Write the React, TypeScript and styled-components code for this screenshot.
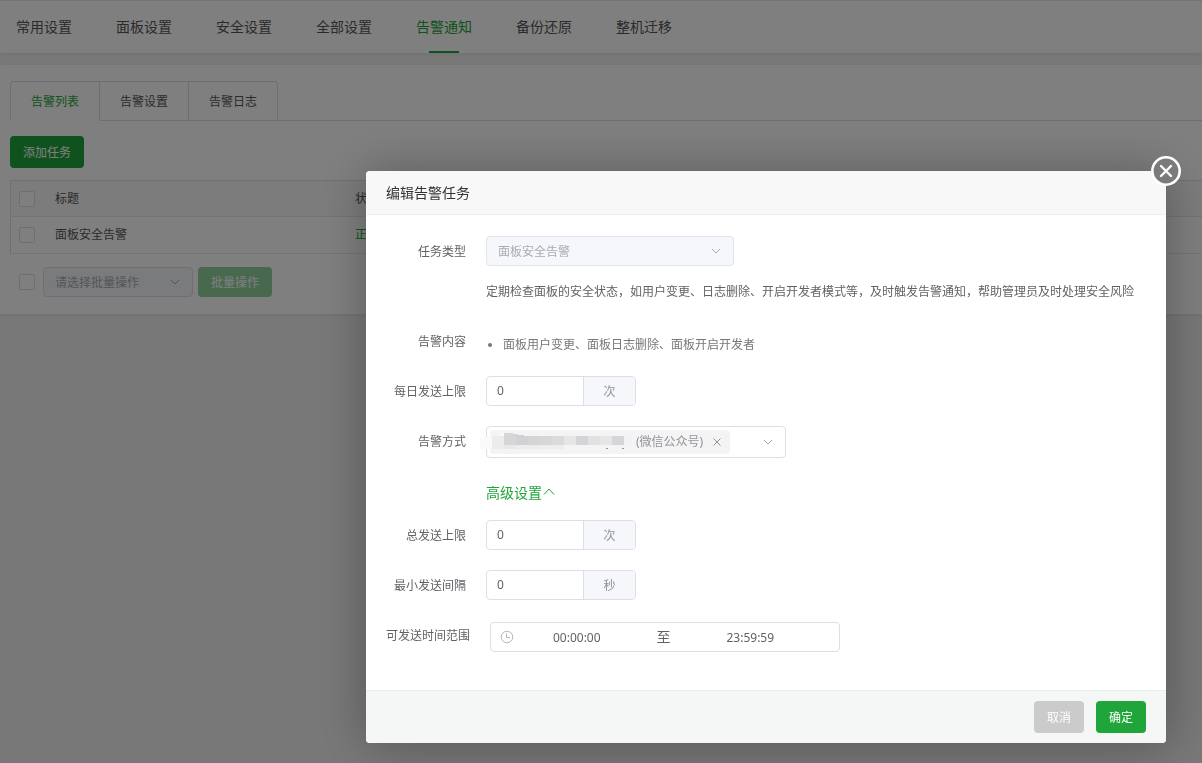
import React from "react";
import styled, { createGlobalStyle, css } from "styled-components";

const GlobalStyle = createGlobalStyle`
  *, *::before, *::after { box-sizing: border-box; }
  body {
    margin: 0;
    background: #f0f0f1;
    color: #606266;
    font: 12px/20px "Noto Sans", "Noto Sans CJK SC", sans-serif;
  }
  button, input, select { font: inherit; color: inherit; }
  a { color: inherit; text-decoration: none; }
`;

const green = "#20a53a";
const line = "#dcdfe6";

const Page = styled.div`
  min-height: 100vh;
`;

const TopNav = styled.nav`
  display: flex;
  gap: 44px;
  height: 53px;
  padding: 0 16px;
  background: #fff;
  border-top: 1px solid #e6e6e6;
  box-shadow: 0 1px 4px rgba(0, 0, 0, 0.08);
`;

const NavLink = styled.a<{ $active?: boolean }>`
  display: flex;
  flex-direction: column;
  align-items: center;
  flex: none;
  font-size: 14px;
  line-height: 52px;
  color: ${(p) => (p.$active ? green : "#555")};
  &::after {
    content: "";
    width: 30px;
    height: 2px;
    margin-top: -2px;
    background: ${(p) => (p.$active ? green : "transparent")};
  }
`;

const Card = styled.main`
  margin-top: 12px;
  padding: 16px 0 17px 10px;
  background: #fff;
  box-shadow: 0 1px 3px rgba(0, 0, 0, 0.08);
`;

const TabBar = styled.div`
  display: flex;
  height: 40px;
  border-bottom: 1px solid ${line};
`;

const Tab = styled.button<{ $active?: boolean }>`
  height: 40px;
  padding: 2px 20px 0;
  margin: 0;
  border: 1px solid ${line};
  border-left-width: 0;
  border-bottom-color: ${(p) => (p.$active ? "#fff" : line)};
  background: #fff;
  color: ${(p) => (p.$active ? green : "#555")};
  &:first-child {
    border-left-width: 1px;
    border-top-left-radius: 4px;
  }
  &:last-child { border-top-right-radius: 4px; }
`;

const Button = styled.button<{ $tone?: "muted" | "soft"; $small?: boolean }>`
  height: ${(p) => (p.$small ? 30 : 32)}px;
  padding: 2px 13px 0;
  border: 0;
  border-radius: 4px;
  color: #fff;
  background: ${(p) =>
    p.$tone === "muted" ? "#cbcbcb" : p.$tone === "soft" ? "#90d29d" : green};
`;

const Toolbar = styled.div`
  padding: 15px 0 12px;
`;

const Table = styled.table`
  width: 100%;
  table-layout: fixed;
  border-collapse: separate;
  border-spacing: 0;
  border-top: 1px solid ${line};
  border-left: 1px solid ${line};
`;

const Cell = styled.td<{ $green?: boolean }>`
  height: 37px;
  padding: 0 0 0 8px;
  text-align: left;
  font-weight: 400;
  color: ${(p) => (p.$green ? green : "#555")};
  border-bottom: 1px solid #e6e8ec;
  thead & { height: 36px; background: #f8f8f8; }
`;

const Check = styled.input.attrs({ type: "checkbox" })`
  appearance: none;
  display: block;
  flex: none;
  width: 16px;
  height: 16px;
  margin: 0;
  border: 1px solid ${line};
  border-radius: 2px;
  background: #fff;
`;

const BatchRow = styled.div`
  display: flex;
  align-items: center;
  padding: 13px 0 0 9px;
`;

const SelectBox = styled.div<{ $width: number }>`
  display: grid;
  align-items: center;
  width: ${(p) => p.$width}px;
  height: 30px;
  & > * { grid-area: 1 / 1; }
  & > svg { justify-self: end; margin-right: 12px; pointer-events: none; }
`;

const Select = styled.select<{ $page?: boolean }>`
  appearance: none;
  width: 100%;
  height: 30px;
  padding: 2px 11px 0;
  border: 1px solid ${(p) => (p.$page ? line : "#e1e4ea")};
  border-radius: 4px;
  background: #f5f7fa;
  color: #a8abb2;
  opacity: 1;
`;

const BatchSelect = styled(SelectBox)`
  margin: 0 5px 0 8px;
`;

const Overlay = styled.div`
  position: fixed;
  inset: 0;
  display: flex;
  justify-content: flex-end;
  align-items: flex-end;
  padding: 20px 36px;
  background: rgba(0, 0, 0, 0.5);
`;

const Dialog = styled.section`
  position: relative;
  width: 800px;
  max-width: 100%;
  border-radius: 4px;
  background: #fff;
  box-shadow: 1px 1px 50px rgba(0, 0, 0, 0.3);
`;

const CloseButton = styled.button`
  position: absolute;
  top: -15px;
  right: -15px;
  width: 30px;
  height: 30px;
  padding: 0;
  border: 0;
  border-radius: 50%;
  background: none;
  svg { display: block; }
`;

const DialogTitle = styled.h2`
  margin: 0;
  padding: 0 20px;
  font-size: 14px;
  font-weight: 400;
  line-height: 43px;
  color: #333;
  background: #f8f8f8;
  border-bottom: 1px solid #eee;
  border-radius: 4px 4px 0 0;
`;

const Form = styled.form`
  display: flex;
  flex-direction: column;
  gap: 20px;
  padding: 21px 20px 38px;
`;

const FormRow = styled.div`
  display: flex;
  gap: 20px;
`;

const labelStyle = css`
  flex: none;
  min-width: 80px;
  height: 30px;
  line-height: 32px;
  text-align: right;
  white-space: nowrap;
`;
const Label = styled.label`${labelStyle}`;
const LabelText = styled.span`${labelStyle}`;

const Field = styled.div`
  flex: 1;
  min-width: 0;
`;

const Hint = styled.p`
  height: 30px;
  margin: 10px 0 0;
  line-height: 32px;
  white-space: nowrap;
`;

const Bullets = styled.ul`
  height: 30px;
  margin: 0;
  padding: 4px 0 0 17px;
  line-height: 30px;
  color: #777;
`;

const InputGroup = styled.div`
  display: flex;
  width: 150px;
  height: 30px;
  border: 1px solid ${line};
  border-radius: 4px;
`;

const NumberInput = styled.input`
  flex: 1;
  min-width: 0;
  padding: 0 10px;
  border: 0;
  background: none;
`;

const Unit = styled.span`
  width: 52px;
  line-height: 30px;
  height: 28px;
  text-align: center;
  color: #909399;
  background: #f5f7fa;
  border-left: 1px solid ${line};
  border-radius: 0 3px 3px 0;
`;

const TagSelect = styled.div`
  display: flex;
  align-items: center;
  justify-content: space-between;
  width: 300px;
  height: 32px;
  padding: 0 11px 0 3px;
  border: 1px solid ${line};
  border-radius: 4px;
`;

const Tag = styled.span`
  display: flex;
  align-items: center;
  height: 24px;
  padding-right: 8px;
  border-radius: 4px;
  color: #909399;
  background: #f4f4f5;
`;

const Mosaic = styled.svg`
  flex: none;
  margin: 0 0 0 -10px;
`;

const IconButton = styled.button`
  display: flex;
  margin: 0;
  padding: 0;
  border: 0;
  background: none;
`;

const TagClose = styled(IconButton)`
  margin-left: 9px;
`;

const Toggle = styled(IconButton)`
  align-items: center;
  margin: 0 0 -8px 100px;
  align-self: flex-start;
  font-size: 14px;
  line-height: 30px;
  color: ${green};
`;

const TimeRange = styled.div`
  display: flex;
  align-items: center;
  width: 350px;
  height: 30px;
  margin: 2px 0 0;
  padding: 0 26px 0 9px;
  border: 1px solid ${line};
  border-radius: 4px;
  svg { flex: none; }
`;

const TimeInput = styled.input`
  flex: 1;
  min-width: 0;
  padding: 2px 0 0;
  border: 0;
  text-align: center;
  background: none;
`;

const Separator = styled.span`
  padding: 0 17px;
  font-size: 14px;
`;

const Footer = styled.footer`
  display: flex;
  justify-content: flex-end;
  gap: 12px;
  padding: 10px 20px;
  background: #f5f7f7;
  border-top: 1px solid #e8eeee;
  border-radius: 0 0 4px 4px;
`;

const Chevron = ({ up = false, color = "#a8abb2" }) => (
  <svg
    width={up ? 14 : 12}
    height={up ? 14 : 12}
    viewBox={up ? "0 0 14 14" : "0 0 12 12"}
    fill="none"
    stroke={color}
    aria-hidden="true"
  >
    <path d={up ? "M2 8.5 7 3 12 8.5" : "M2 4 6 8 10 4"} />
  </svg>
);

/* x, y, width, height and shade of each tile that hides the account name */
const blocks: [number, number, number, number, string][] = [
  [0, 4, 12, 12, "#f9fafa"],
  [12, 3, 12, 13, "#ececed"],
  [20, 0, 4, 3, "#fafafa"],
  [24, 0, 9, 12, "#d6d6d9"],
  [33, 1, 5, 11, "#d6d6d8"],
  [36, 2, 8, 10, "#d0d1d3"],
  [44, 3, 4, 9, "#d0d1d3"],
  [48, 3, 12, 9, "#d4d5d6"],
  [60, 3, 12, 9, "#d6d7d9"],
  [72, 3, 12, 9, "#dadbdd"],
  [84, 3, 12, 9, "#e6e6e6"],
  [96, 3, 12, 9, "#d4d5d8"],
  [108, 3, 12, 9, "#e0e1e3"],
  [120, 3, 12, 9, "#e6e6e6"],
  [132, 3, 12, 9, "#d5d6d9"],
  [144, 3, 8, 9, "#f1f2f5"],
  [24, 12, 12, 4, "#e8e8ea"],
  [36, 12, 24, 4, "#ececed"],
  [60, 12, 24, 4, "#ededee"],
  [126, 15, 2, 1, "#909399"],
  [142, 15, 2, 1, "#909399"],
];

const Amount = ({ id, label, unit }: { id: string; label: string; unit: string }) => (
  <FormRow>
    <Label htmlFor={id}>{label}</Label>
    <InputGroup>
      <NumberInput id={id} defaultValue="0" inputMode="numeric" />
      <Unit>{unit}</Unit>
    </InputGroup>
  </FormRow>
);

const navItems = ["常用设置", "面板设置", "安全设置", "全部设置", "告警通知", "备份还原", "整机迁移"];
const tabs = ["告警列表", "告警设置", "告警日志"];

export default function App() {
  return (
    <>
      <GlobalStyle />
      <Page>
        <TopNav>
          {navItems.map((item) => (
            <NavLink key={item} href="#" $active={item === "告警通知"}>{item}</NavLink>
          ))}
        </TopNav>
        <Card>
          <TabBar role="tablist">
            {tabs.map((tab, i) => (
              <Tab key={tab} type="button" role="tab" aria-selected={i === 0} $active={i === 0}>{tab}</Tab>
            ))}
          </TabBar>
          <Toolbar>
            <Button type="button">添加任务</Button>
          </Toolbar>
          <Table>
            <colgroup>
              <col style={{ width: 36 }} />
              <col style={{ width: 300 }} />
              <col />
            </colgroup>
            <thead>
              <tr>
                <Cell as="th"><Check aria-label="全选" /></Cell>
                <Cell as="th">标题</Cell>
                <Cell as="th">状态</Cell>
              </tr>
            </thead>
            <tbody>
              <tr>
                <Cell><Check aria-label="面板安全告警" /></Cell>
                <Cell>面板安全告警</Cell>
                <Cell $green>正常</Cell>
              </tr>
            </tbody>
          </Table>
          <BatchRow>
            <Check aria-label="批量选择" />
            <BatchSelect $width={150}>
              <Select $page disabled aria-label="批量操作">
                <option>请选择批量操作</option>
              </Select>
              <Chevron />
            </BatchSelect>
            <Button type="button" $tone="soft" $small>批量操作</Button>
          </BatchRow>
        </Card>
      </Page>

      <Overlay>
        <Dialog role="dialog" aria-modal="true" aria-labelledby="dialog-title">
          <DialogTitle id="dialog-title">编辑告警任务</DialogTitle>
          <CloseButton type="button" aria-label="关闭">
            <svg width="30" height="30" viewBox="0 0 30 30" fill="none" stroke="#fff" strokeLinecap="round">
              <circle cx="15" cy="15" r="13.7" fill="#7b7b7b" strokeWidth="2.6" />
              <path d="M10 10 20 20M20 10 10 20" strokeWidth="2.4" />
            </svg>
          </CloseButton>
          <Form>
            <FormRow>
              <Label htmlFor="task-type">任务类型</Label>
              <Field>
                <SelectBox $width={248}>
                  <Select id="task-type" disabled>
                    <option>面板安全告警</option>
                  </Select>
                  <Chevron />
                </SelectBox>
                <Hint>定期检查面板的安全状态，如用户变更、日志删除、开启开发者模式等，及时触发告警通知，帮助管理员及时处理安全风险</Hint>
              </Field>
            </FormRow>
            <FormRow>
              <LabelText>告警内容</LabelText>
              <Bullets>
                <li>面板用户变更、面板日志删除、面板开启开发者</li>
              </Bullets>
            </FormRow>
            <Amount id="daily-limit" label="每日发送上限" unit="次" />
            <FormRow>
              <LabelText>告警方式</LabelText>
              <TagSelect>
                <Tag>
                  <Mosaic width="156" height="18" viewBox="0 0 156 18" aria-hidden="true">
                    {blocks.map(([x, y, w, h, fill], i) => (
                      <rect key={i} x={x} y={y} width={w} height={h} fill={fill} />
                    ))}
                  </Mosaic>
                  (微信公众号)
                  <TagClose type="button" aria-label="移除">
                    <svg width="10" height="10" viewBox="0 0 10 10" stroke="#909399">
                      <path d="M1.5 1.5 8.5 8.5M8.5 1.5 1.5 8.5" />
                    </svg>
                  </TagClose>
                </Tag>
                <IconButton type="button" aria-label="展开"><Chevron /></IconButton>
              </TagSelect>
            </FormRow>
            <Toggle type="button">高级设置<Chevron up color={green} /></Toggle>
            <Amount id="total-limit" label="总发送上限" unit="次" />
            <Amount id="min-interval" label="最小发送间隔" unit="秒" />
            <FormRow>
              <Label htmlFor="time-start">可发送时间范围</Label>
              <TimeRange>
                <svg width="14" height="14" viewBox="0 0 14 14" fill="none" stroke="#b4b7bd" aria-hidden="true">
                  <circle cx="7" cy="7" r="5.8" />
                  <path d="M6.5 3.5V7.5H10" />
                </svg>
                <TimeInput id="time-start" defaultValue="00:00:00" />
                <Separator>至</Separator>
                <TimeInput aria-label="结束时间" defaultValue="23:59:59" />
              </TimeRange>
            </FormRow>
          </Form>
          <Footer>
            <Button type="button" $tone="muted">取消</Button>
            <Button type="button">确定</Button>
          </Footer>
        </Dialog>
      </Overlay>
    </>
  );
}
